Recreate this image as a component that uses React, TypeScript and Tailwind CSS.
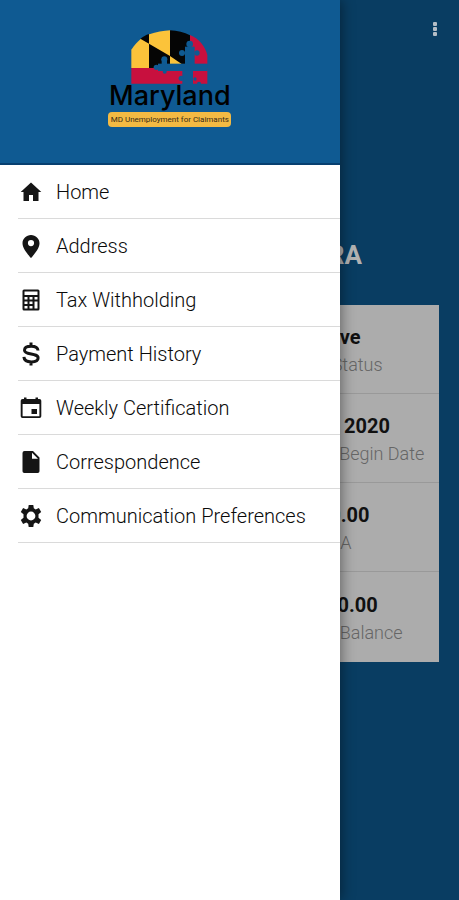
import type { ReactNode } from "react";

const menuItems: { label: string; icon: ReactNode }[] = [
  {
    label: "Home",
    icon: <path d="M10 21v-6h4v6h5.500v-9h2.800L12 2.500 1.700 12h2.800v9z" />,
  },
  {
    label: "Address",
    icon: (
      <path
        fillRule="evenodd"
        d="M12 1C7.300 1 3.500 4.700 3.500 9.300 3.500 15.500 12 24 12 24s8.500-8.500 8.500-14.700C20.500 4.700 16.700 1 12 1zm0 11.200a3.100 3.100 0 1 1 0-6.200 3.100 3.100 0 0 1 0 6.200z"
      />
    ),
  },
  {
    label: "Tax Withholding",
    icon: (
      <path
        fillRule="evenodd"
        d="M5 1.500h14a1.500 1.500 0 0 1 1.500 1.500v18a1.500 1.500 0 0 1-1.500 1.500H5A1.500 1.500 0 0 1 3.500 21V3A1.500 1.500 0 0 1 5 1.500zM5.500 3.500v3.500h13V3.500zM5.500 9v2.500h3V9zm5 0v2.500h3V9zm5 0v2.500h3V9zM5.500 13.500V16h3v-2.500zm5 0V16h3v-2.500zM5.500 18v2.500h3V18zm5 0v2.500h3V18zm5-4.500v7h3v-7z"
      />
    ),
  },
  {
    label: "Payment History",
    icon: (
      <path
        fill="none"
        stroke="currentColor"
        strokeWidth="3"
        d="M12 .5v4M12 19.500v4M19 8.500C18.800 5.500 16 4.300 12.200 4.300 8.500 4.300 5.500 5.700 5.500 8.200c0 5.300 13.600 2.300 13.600 7.800 0 2.500-2.900 3.900-6.700 3.900-4.200 0-7.300-1.700-7.500-5"
      />
    ),
  },
  {
    label: "Weekly Certification",
    icon: (
      <path
        fillRule="evenodd"
        d="M5 1.500h2.500V3h9V1.500H19V3h1.500A1.800 1.800 0 0 1 22.300 4.800v15.400a1.800 1.800 0 0 1-1.800 1.800h-17a1.800 1.800 0 0 1-1.800-1.800V4.800A1.800 1.800 0 0 1 3.500 3H5zM3.600 8V20.200h16.800V8zM12.500 13H18v5h-5.500z"
      />
    ),
  },
  {
    label: "Correspondence",
    icon: (
      <path
        fillRule="evenodd"
        d="M5.500 1H14l6.500 6.500v13.700a1.800 1.800 0 0 1-1.800 1.800H5.300a1.800 1.800 0 0 1-1.800-1.800V3a2 2 0 0 1 2-2zM13 2.800v6h6z"
      />
    ),
  },
  {
    label: "Communication Preferences",
    icon: (
      <path
        fillRule="evenodd"
        d="M9.700 1h4.600l.5 3.300 1.900 1.100 3.200-1.300 2.300 4-2.700 2.100v3.600l2.700 2.100-2.300 4-3.200-1.300-1.900 1.100-.5 3.300H9.700l-.5-3.300-1.900-1.100-3.200 1.300-2.300-4 2.700-2.100v-3.600L1.800 8.100l2.300-4 3.200 1.300 1.900-1.100zM12 7.600a4.400 4.400 0 1 0 0 8.800 4.400 4.400 0 0 0 0-8.800z"
      />
    ),
  },
];

const claimDetails = [
  { value: "Active", label: "Claim Status" },
  { value: "Apr 12, 2020", label: "Benefit Year Begin Date" },
  { value: "$000.00", label: "WBA" },
  { value: "$0,000.00", label: "This Year Balance" },
];

const Flag = () => (
  <svg viewBox="111 29 231 162" className="w-[77px] h-[54px]" aria-hidden="true">
    <path fill="#fbc33a" d="M112 143V88c8-12 17-22 28-32l26-14c20-7 42-11 63-12v113z" />
    <path fill="#050505" d="M139 55c8-6 17-11 26-14v29zM165 70l63 37 36 26v10h-99zM228 30c22 1 43 6 60 15v88h-24l-36-26z" />
    <path fill="#fbc33a" d="M228 107l36 25h-36z" />
    <path fill="#c8103e" d="M288 44c26 10 46 34 52 60v27h-52zM112 143h228v47H112z" />
    <g fill="#0f5a92">
      <rect x="192" y="130" width="149" height="22" />
      <rect x="273" y="79" width="29" height="55" />
      <rect x="265" y="150" width="32" height="41" />
      <rect x="203" y="116" width="16" height="18" />
      <circle cx="211" cy="117" r="9" />
      <circle cx="187" cy="141" r="8" />
      <circle cx="287" cy="71" r="10" />
      <circle cx="264" cy="98" r="9" />
      <circle cx="309" cy="98" r="8" />
      <circle cx="212" cy="154" r="6" />
      <circle cx="262" cy="174" r="8" />
      <circle cx="303" cy="176" r="5" />
      <circle cx="315" cy="190" r="6" />
    </g>
  </svg>
);

const Drawer = () => (
  <aside className="relative w-[74%] shrink-0 bg-white shadow-[2px_0_12px_rgba(0,0,0,0.4)]">
    <header className="flex flex-col items-center bg-[#0f5a92] border-b-2 border-[#073f70] pt-[30px] h-[165px]">
      <Flag />
      <div className="-mt-1 font-['Inter',sans-serif] text-[27px] leading-8 font-medium text-black">Maryland</div>
      <div className="flex h-[15px] w-[123px] items-center justify-center rounded-sm bg-[#f3ba43] text-[8px] leading-none whitespace-nowrap text-[#382b16]">
        MD Unemployment for Claimants
      </div>
    </header>
    <nav>
      <ul className="pl-[18px]">
        {menuItems.map((item) => (
          <li key={item.label} className="border-b border-[#dadada]">
            <a href="#" className="flex h-[53px] items-center gap-[13px] pl-px text-xl font-light whitespace-nowrap text-[#0a0a0a]">
              <svg viewBox="0 0 24 24" className="size-6 shrink-0 fill-current text-[#151515]" aria-hidden="true">
                {item.icon}
              </svg>
              {item.label}
            </a>
          </li>
        ))}
      </ul>
    </nav>
  </aside>
);

export default function App() {
  return (
    <div className="grid min-h-screen bg-[#093d62] font-['Roboto',sans-serif] overflow-hidden">
      <main className="col-start-1 row-start-1 px-5">
        <div className="flex justify-end pt-[18px]">
          <button type="button" aria-label="More options" className="-mr-2 flex size-6 items-center justify-center text-[#b5bec6]">
            <svg viewBox="0 0 24 24" className="size-6 fill-current" aria-hidden="true">
              <rect x="10" y="4" width="4" height="4" rx="1" />
              <rect x="10" y="9" width="4" height="4" rx="1" />
              <rect x="10" y="14" width="4" height="4" rx="1" />
            </svg>
          </button>
        </div>
        <h1 className="mt-[197px] ml-[50%] pr-1 text-center text-[26px] leading-8 font-bold text-[#b2b2b2]">IARA</h1>
        <dl className="mt-[34px] bg-[#acacac] pb-px">
          {claimDetails.map((detail) => (
            <div
              key={detail.label}
              className="ml-[50%] flex h-[89px] flex-col-reverse justify-center border-b border-[#999999] pt-1 pr-1 text-center whitespace-nowrap last:border-b-0"
            >
              <dt className="text-lg leading-7 font-light text-[#666666]">{detail.label}</dt>
              <dd className="text-xl leading-7 font-bold text-[#111111]">{detail.value}</dd>
            </div>
          ))}
        </dl>
      </main>
      <div className="col-start-1 row-start-1 flex">
        <Drawer />
      </div>
    </div>
  );
}
